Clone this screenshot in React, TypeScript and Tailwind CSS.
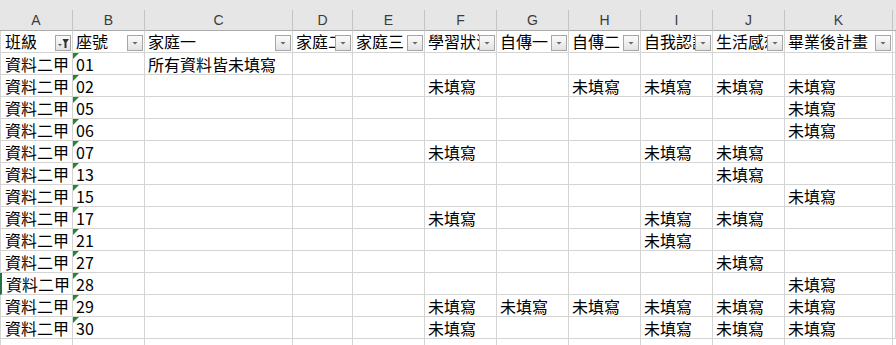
import React from 'react';

type Col = { key: string; title: string; filtered?: boolean };

const columns: Col[] = [
  { key: 'A', title: '班級', filtered: true },
  { key: 'B', title: '座號' },
  { key: 'C', title: '家庭一' },
  { key: 'D', title: '家庭二' },
  { key: 'E', title: '家庭三' },
  { key: 'F', title: '學習狀況' },
  { key: 'G', title: '自傳一' },
  { key: 'H', title: '自傳二' },
  { key: 'I', title: '自我認識' },
  { key: 'J', title: '生活感想' },
  { key: 'K', title: '畢業後計畫' },
];

const gridCols =
  'grid grid-cols-[73px_72px_148px_60px_72px_72px_72px_72px_72px_72px_108px_1fr]';

const NA = '未填寫';

// 每列：座號 + 各欄內容 (C..K)
const rows: { no: string; cells: Record<string, string> }[] = [
  { no: '01', cells: { C: '所有資料皆未填寫' } },
  { no: '02', cells: { F: NA, H: NA, I: NA, J: NA, K: NA } },
  { no: '05', cells: { K: NA } },
  { no: '06', cells: { K: NA } },
  { no: '07', cells: { F: NA, I: NA, J: NA } },
  { no: '13', cells: { J: NA } },
  { no: '15', cells: { K: NA } },
  { no: '17', cells: { F: NA, I: NA, J: NA } },
  { no: '21', cells: { I: NA } },
  { no: '27', cells: { J: NA } },
  { no: '28', cells: { K: NA } },
  { no: '29', cells: { F: NA, G: NA, H: NA, I: NA, J: NA, K: NA } },
  { no: '30', cells: { F: NA, I: NA, J: NA, K: NA } },
];

const FilterButton: React.FC<{ active?: boolean }> = ({ active }) => (
  <span className="shrink-0 w-[16px] h-[16px] border border-[#a6a6a6] bg-gradient-to-b from-[#fbfbfb] to-[#e2e2e2] flex items-center justify-center">
    {active ? (
      <svg width="14" height="14" viewBox="0 0 14 14">
        <polygon points="2,8 6,8 4,10" fill="#555" />
        <polygon points="6.5,3 13,3 10.5,6.5 10.5,12 8.5,12 8.5,6.5" fill="#333" />
      </svg>
    ) : (
      <svg width="14" height="14" viewBox="0 0 14 14">
        <polygon points="4.5,6 9.5,6 7,8.5" fill="#666" />
      </svg>
    )}
  </span>
);

const cellBase =
  'h-[22px] border-r border-b border-[#d4d4d4] flex items-end whitespace-nowrap text-[16px] leading-[20px] text-black';

export default function App() {
  return (
    <div
      className="w-[896px] h-[345px] overflow-hidden bg-white"
      style={{ fontFamily: '"Noto Sans CJK TC", "Liberation Sans", sans-serif' }}
    >
      {/* 欄標題 A B C ... */}
      <div className="bg-[#e6e6e6] pt-[10px] border-b border-[#ababab]">
        <div className={`${gridCols} h-[20px]`}>
          {columns.map((c) => (
            <div
              key={c.key}
              className="border-r border-[#c4c4c4] flex items-center justify-center text-[14px] text-[#3c3c3c]"
              style={{ fontFamily: '"Liberation Sans", sans-serif' }}
            >
              {c.key}
            </div>
          ))}
          <div />
        </div>
      </div>

      {/* 篩選列 */}
      <div className={gridCols}>
        {columns.map((c, i) => (
          <div
            key={c.key}
            className={`${cellBase} justify-between pl-[3px] pr-[1px] pb-[1px] ${
              i === 0 ? 'border-l pl-[4px]' : ''
            }`}
          >
            <span className="min-w-0 overflow-x-clip">{c.title}</span>
            <FilterButton active={c.filtered} />
          </div>
        ))}
        <div className={cellBase} />
      </div>

      {/* 資料列 */}
      {rows.map((r) => (
        <div key={r.no} className={gridCols}>
          <div
            className={`${cellBase} pl-[4px] ${
              r.no === '28' ? 'border-l-2 border-l-[#217346]' : 'border-l'
            }`}
          >
            資料二甲
          </div>
          <div className={`${cellBase} relative pl-[3px]`}>
            <span className="absolute left-0 top-0 w-0 h-0 border-t-[6px] border-t-[#1e8c2c] border-r-[6px] border-r-transparent" />
            {r.no}
          </div>
          {columns.slice(2).map((c) => (
            <div key={c.key} className={`${cellBase} pl-[3px]`}>
              {r.cells[c.key] ?? ''}
            </div>
          ))}
          <div className={cellBase} />
        </div>
      ))}
      <div className={gridCols}>
        {columns.map((c, i) => (
          <div key={c.key} className={`${cellBase} ${i === 0 ? 'border-l' : ''}`} />
        ))}
      </div>
    </div>
  );
}
